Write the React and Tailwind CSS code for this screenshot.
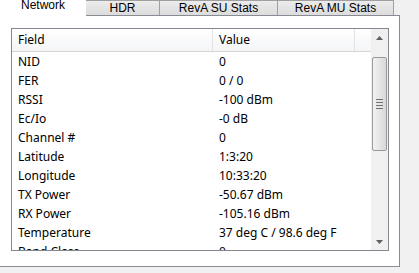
import React from 'react';

const rows = [
  ['NID', '0'],
  ['FER', '0 / 0'],
  ['RSSI', '-100 dBm'],
  ['Ec/Io', '-0 dB'],
  ['Channel #', '0'],
  ['Latitude', '1:3:20'],
  ['Longitude', '10:33:20'],
  ['TX Power', '-50.67 dBm'],
  ['RX Power', '-105.16 dBm'],
  ['Temperature', '37 deg C / 98.6 deg F'],
  ['Band Class', '0'],
];

const tabs = [
  { label: 'HDR', w: 'w-[75px]' },
  { label: 'RevA SU Stats', w: 'w-[119px]' },
  { label: 'RevA MU Stats', w: 'w-[117px]' },
];

export default function App() {
  return (
    <div className="w-[419px] h-[273px] overflow-hidden bg-[#f0f0f0] text-black" style={{ fontFamily: '"Liberation Sans", Arial, sans-serif' }}>
      {/* Tab strip */}
      <div className="flex h-[15px] items-end">
        <div className="relative z-10 -mb-px flex h-[16px] w-[86px] items-start justify-center bg-white text-[12px] leading-[12px] -mt-[3px]">
          <span className="-translate-y-[1px]">Network</span>
        </div>
        {tabs.map((t) => (
          <div
            key={t.label}
            className={`${t.w} flex h-[15px] items-center justify-center border-l border-r border-t border-[#a0a0a0] bg-gradient-to-b from-[#ececec] to-[#dcdcdc] text-[12px] leading-[12px] -ml-px first:ml-0`}
          >
            {t.label}
          </div>
        ))}
      </div>

      {/* Tab panel */}
      <div className="w-[400px] h-[252px] border-t border-r border-b border-[#898c95] bg-white pl-[11px] pt-[12px]">
        <div className="flex w-[378px] h-[223px] border border-[#828790] bg-white" style={{ fontFamily: '"Noto Sans", "Open Sans", sans-serif' }}>
          {/* List */}
          <div className="flex-1 overflow-hidden text-[12px]">
            <div className="flex h-[23px] border-b border-[#d5d5d5] bg-gradient-to-b from-white to-[#f4f5f7]">
              <div className="w-[201px] border-r border-[#e2e3e5] pl-[6px] leading-[22px]">Field</div>
              <div className="w-[142px] border-r border-[#e2e3e5] pl-[6px] leading-[22px]">Value</div>
              <div className="flex-1" />
            </div>
            {rows.map(([f, v]) => (
              <div key={f} className="flex h-[19px] leading-[19px] whitespace-nowrap">
                <div className="w-[201px] pl-[6px]">{f}</div>
                <div className="pl-[6px]">{v}</div>
              </div>
            ))}
          </div>
          {/* Scrollbar */}
          <div className="flex w-[17px] flex-col bg-[#f0f0f0]">
            <div className="flex h-[17px] items-center justify-center">
              <svg width="7" height="4" viewBox="0 0 7 4"><path d="M0 4 L3.5 0 L7 4 Z" fill="#606060" /></svg>
            </div>
            <div className="flex-1 pt-[11px]">
              <div className="mx-auto flex h-[94px] w-[15px] items-center justify-center rounded-[2px] border border-[#9a9a9a] bg-gradient-to-r from-[#f2f2f2] to-[#d8d8d8]">
                <div className="flex flex-col gap-[2px]">
                  <div className="h-px w-[7px] bg-[#707070]" />
                  <div className="h-px w-[7px] bg-[#707070]" />
                  <div className="h-px w-[7px] bg-[#707070]" />
                  <div className="h-px w-[7px] bg-[#707070]" />
                </div>
              </div>
            </div>
            <div className="flex h-[17px] items-center justify-center">
              <svg width="7" height="4" viewBox="0 0 7 4"><path d="M0 0 L3.5 4 L7 0 Z" fill="#606060" /></svg>
            </div>
          </div>
        </div>
      </div>
    </div>
  );
}
